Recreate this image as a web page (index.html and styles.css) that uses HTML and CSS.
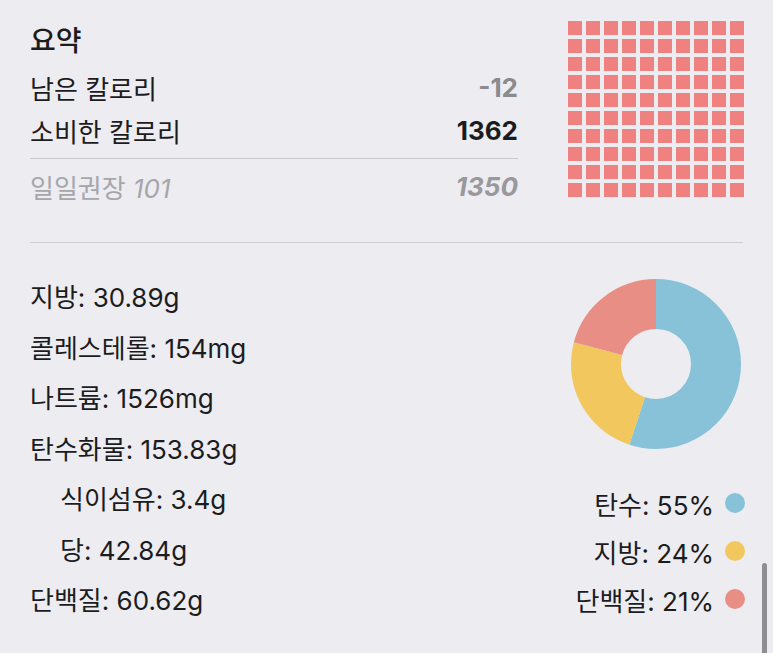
FILE: index.html
```html
<!DOCTYPE html>
<html lang="ko">
<head>
<meta charset="utf-8">
<link rel="stylesheet" href="styles.css">
</head>
<body>
<main class="page">
  <section class="summary">
    <div class="summary-left">
      <h1 class="title">요약</h1>
      <div class="row"><span>남은 칼로리</span><span class="val-grey">-12</span></div>
      <div class="row row-last"><span>소비한 칼로리</span><span class="val-bold">1362</span></div>
      <div class="row row-rec"><span>일일권장 <i>101</i></span><span class="val-rec">1350</span></div>
    </div>
    <div class="waffle" id="waffle"></div>
  </section>
  <hr class="divider">
  <section class="nutrients">
    <ul class="list">
      <li>지방: 30.89g</li>
      <li>콜레스테롤: 154mg</li>
      <li>나트륨: 1526mg</li>
      <li>탄수화물: 153.83g</li>
      <li class="sub">식이섬유: 3.4g</li>
      <li class="sub">당: 42.84g</li>
      <li>단백질: 60.62g</li>
    </ul>
    <div class="chart-col">
      <svg class="donut" width="170" height="170" viewBox="0 0 170 170">
        <g transform="rotate(-90 85 85)">
          <circle cx="85" cy="85" r="60" fill="none" stroke="#88c2d9" stroke-width="50" stroke-dasharray="207.35 376.99" stroke-dashoffset="0"/>
          <circle cx="85" cy="85" r="60" fill="none" stroke="#f1c75e" stroke-width="50" stroke-dasharray="90.48 376.99" stroke-dashoffset="-207.35"/>
          <circle cx="85" cy="85" r="60" fill="none" stroke="#e88e85" stroke-width="50" stroke-dasharray="79.17 376.99" stroke-dashoffset="-297.83"/>
        </g>
      </svg>
      <ul class="legend">
        <li>탄수: 55% <span class="dot dot-blue"></span></li>
        <li>지방: 24% <span class="dot dot-yellow"></span></li>
        <li>단백질: 21% <span class="dot dot-red"></span></li>
      </ul>
    </div>
  </section>
  <div class="scrollbar"></div>
</main>
<script>
  var w = document.getElementById('waffle');
  for (var i = 0; i < 100; i++) { var s = document.createElement('span'); s.className = 'cell'; w.appendChild(s); }
</script>
</body>
</html>
```

FILE: styles.css
```css
* { box-sizing: border-box; }
html, body { margin: 0; padding: 0; }
body {
  background: #ececf1;
  font-family: Inter, "Noto Sans CJK KR", sans-serif;
  color: #1c1c1e;
  width: 773px;
  height: 653px;
  overflow: hidden;
}
.page { position: relative; height: 653px; }
.summary {
  display: flex;
  align-items: flex-start;
  gap: 50px;
  padding: 17px 0 29px 30px;
}
.summary-left { width: 488px; }
.title {
  margin: 0;
  height: 48px;
  line-height: 48px;
  font-size: 28px;
  font-weight: 500;
}
.row {
  display: flex;
  justify-content: space-between;
  align-items: center;
  height: 44px;
  font-size: 26px;
}
.row-last { border-bottom: 1px solid #c9c9ce; height: 50px; padding-bottom: 6px; }
.row-rec { height: 54px; color: #a6a6ab; }
.row-rec i { font-style: italic; }
.val-grey { color: #8a8a8f; font-weight: 700; }
.val-bold { color: #1c1c1e; font-weight: 700; }
.val-rec { color: #98989d; font-weight: 700; font-style: italic; }
.waffle {
  margin-top: 4px;
  display: grid;
  grid-template-columns: repeat(10, 14px);
  grid-auto-rows: 14px;
  gap: 4px;
}
.cell { background: #ef8180; display: block; }
.divider {
  margin: 0 30px;
  border: 0;
  border-top: 1px solid #cdcdd2;
  height: 0;
}
.nutrients {
  display: flex;
  justify-content: space-between;
  padding: 30px 28px 0 30px;
}
.list {
  list-style: none;
  margin: 0;
  padding: 0;
  font-size: 26px;
}
.list li { height: 50.5px; line-height: 50.5px; white-space: nowrap; }
.list li.sub { padding-left: 30px; }
.chart-col {
  display: flex;
  flex-direction: column;
  align-items: flex-end;
}
.donut { display: block; margin: 6px 4px 0 0; }
.legend {
  list-style: none;
  margin: 30px 0 0;
  padding: 0;
  font-size: 26px;
  text-align: right;
}
.legend li {
  height: 48px;
  display: flex;
  align-items: center;
  justify-content: flex-end;
  gap: 11px;
  white-space: nowrap;
}
.dot { width: 20px; height: 20px; border-radius: 50%; display: inline-block; }
.dot-blue { background: #88c2d9; }
.dot-yellow { background: #f1c75e; }
.dot-red { background: #e88e85; }
.scrollbar {
  position: absolute;
  left: 762px;
  top: 563px;
  width: 5px;
  height: 100px;
  border-radius: 3px;
  background: #8e8e93;
}
```
